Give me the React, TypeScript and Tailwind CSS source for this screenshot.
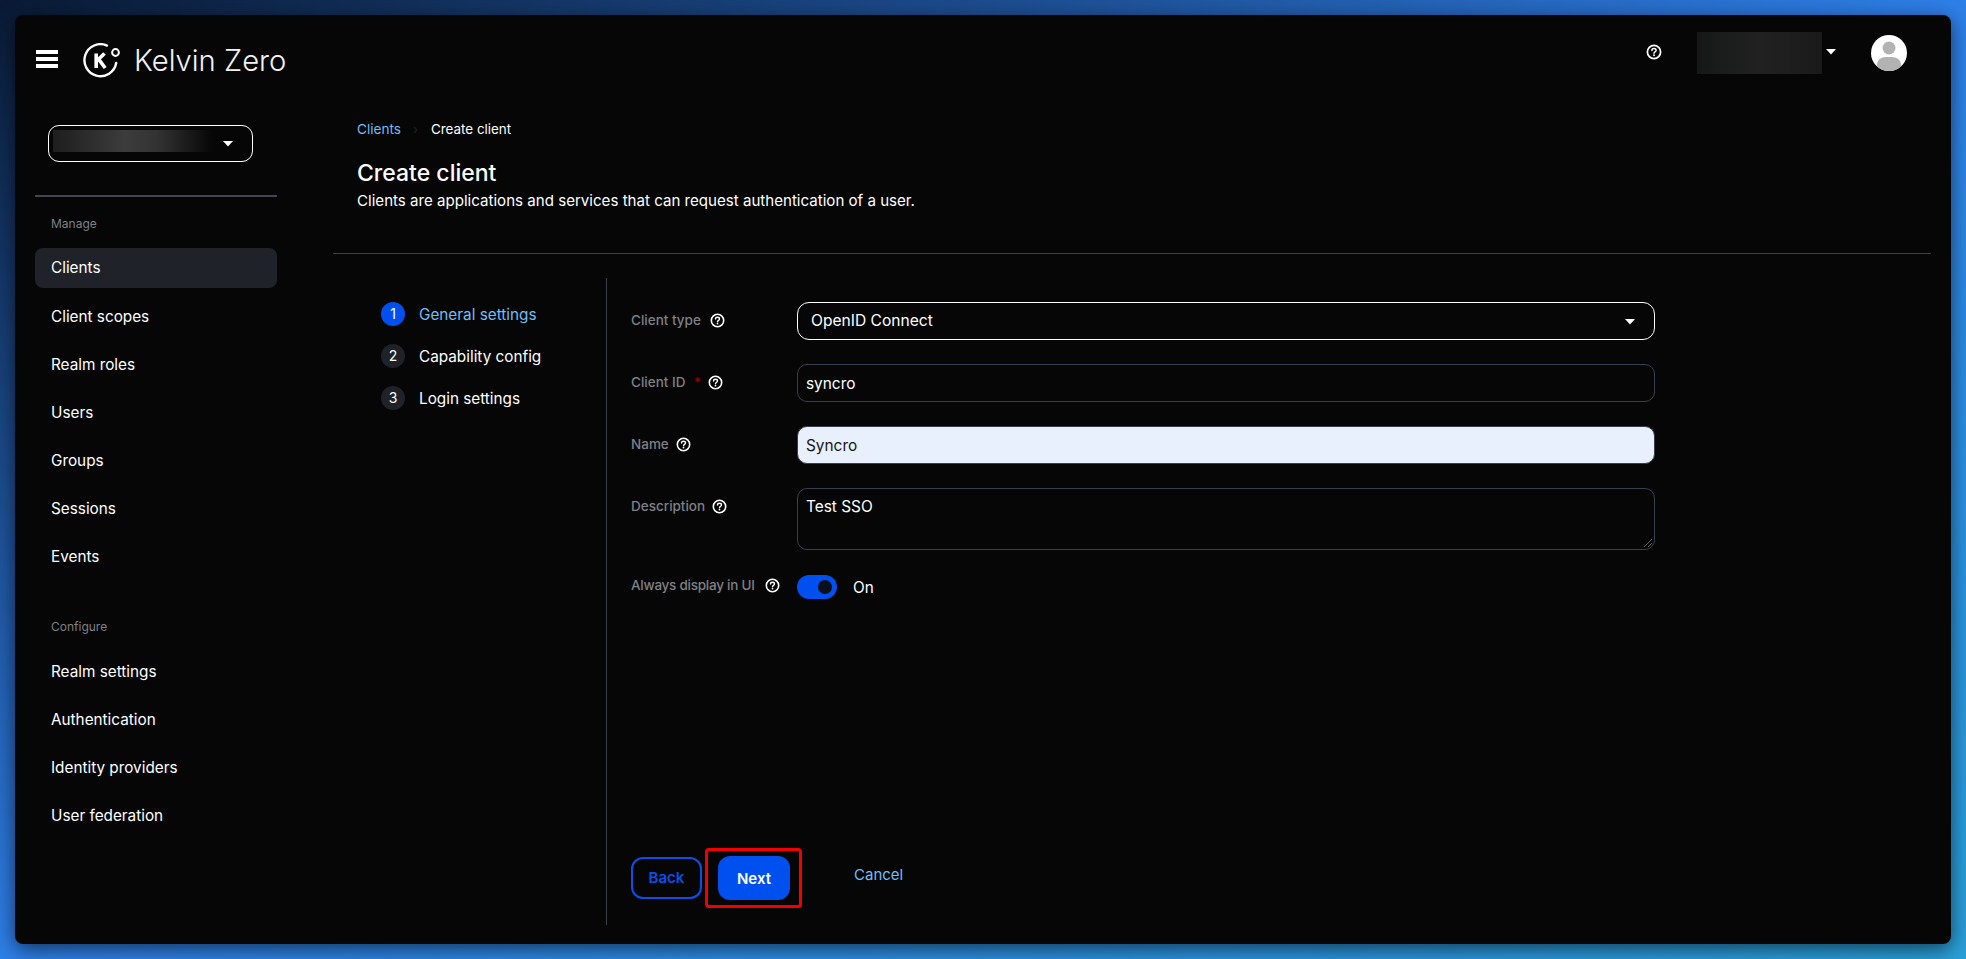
import React from "react";

const font = { fontFamily: "Inter, sans-serif" };

function Help({ className }: { className: string }) {
  return (
    <svg viewBox="0 0 16 16" className={className} fill="none">
      <circle cx="8" cy="8" r="6.6" stroke="#fff" strokeWidth="1.7" />
      <path d="M5.9 6.4c0-1.2 1-1.9 2.1-1.9s2.1.7 2.1 1.8c0 1.6-2.1 1.5-2.1 3" stroke="#fff" strokeWidth="1.5" strokeLinecap="round" />
      <circle cx="8" cy="11.3" r="0.95" fill="#fff" />
    </svg>
  );
}

function Caret({ className }: { className: string }) {
  return (
    <svg viewBox="0 0 10 6" className={className}>
      <path d="M0 0h10L5 5.5z" fill="#fff" />
    </svg>
  );
}

const manage = ["Client scopes", "Realm roles", "Users", "Groups", "Sessions", "Events"];
const configure = ["Realm settings", "Authentication", "Identity providers", "User federation"];

function Step({ n, label, active }: { n: number; label: string; active?: boolean }) {
  return (
    <div className="flex h-[24px] items-center">
      <div className={`flex h-[24px] w-[24px] items-center justify-center rounded-full pb-[2px] text-[14px] text-white ${active ? "bg-[#0050f0]" : "bg-[#1f2229]"}`}>{n}</div>
      <span className={`ml-[14px] pt-[2px] text-[15.3px] ${active ? "text-[#73bcf7]" : "text-white"}`}>{label}</span>
    </div>
  );
}

function FormLabel({ text, top, helpLeft, star, tight }: { text: string; top: number; helpLeft: string; star?: boolean; tight?: boolean }) {
  return (
    <div className={`absolute left-[631px] text-[13.5px] font-medium leading-[16px] text-[#7e8084] ${tight ? "tracking-[-0.25px]" : ""}`} style={{ top }}>
      {text}
      {star && <span className="absolute left-[63px] top-0 text-[#a30000]">*</span>}
      <Help className={`absolute top-[1px] h-[15px] w-[15px] ${helpLeft}`} />
    </div>
  );
}

export default function App() {
  return (
    <div className="relative h-[959px] w-[1966px] overflow-hidden bg-[linear-gradient(to_bottom_right,#0a1a35_0%,#2e7fe8_50%,#2aa0d8_100%)]" style={font}>
      <div className="absolute left-[15px] top-[15px] h-[929px] w-[1936px] rounded-[8px] bg-[#060606] shadow-[0_5px_20px_rgba(0,0,0,0.6)]" />

      {/* Masthead */}
      <div className="absolute left-[36px] top-[50px] flex h-[18px] w-[22px] flex-col justify-between">
        <div className="h-[4px] bg-white" />
        <div className="h-[4px] bg-white" />
        <div className="h-[4px] bg-white" />
      </div>
      <svg viewBox="0 0 38 36" className="absolute left-[83px] top-[43px] h-[36px] w-[38px]" fill="none">
        <path d="M24 2.6A16 16 0 1 0 33.2 20" stroke="#fff" strokeWidth="2.4" strokeLinecap="round" />
        <path d="M13.2 10.5v14.5M13.2 18.5l8.3-8M15.6 16.2l6.6 8.8" stroke="#fff" strokeWidth="3.6" />
        <circle cx="32.5" cy="9.5" r="3.4" stroke="#fff" strokeWidth="2" />
      </svg>
      <div className="absolute left-[134px] top-[43px] text-[29.2px] font-light leading-[36px] text-[#f2f2f2]">Kelvin Zero</div>

      <Help className="absolute left-[1646px] top-[44px] h-[16px] w-[16px]" />
      <div className="absolute left-[1697px] top-[32px] h-[42px] w-[125px] bg-[linear-gradient(90deg,#161818,#212121_50%,#1a1a1a)]" />
      <Caret className="absolute left-[1826px] top-[49px] h-[6px] w-[10px]" />
      <svg viewBox="0 0 36 36" className="absolute left-[1871px] top-[35px] h-[36px] w-[36px]">
        <clipPath id="avatar"><circle cx="18" cy="18" r="18" /></clipPath>
        <g clipPath="url(#avatar)">
          <rect width="36" height="36" fill="#fff" />
          <circle cx="18" cy="13" r="6.5" fill="#b2b2b2" />
          <path d="M6 36v-6c0-5 4-8 9-8h6c5 0 9 3 9 8v6z" fill="#b2b2b2" />
        </g>
      </svg>

      {/* Sidebar */}
      <div className="absolute left-[48px] top-[125px] h-[37px] w-[205px] rounded-[11px] border border-white">
        <div className="absolute left-[4px] top-[4px] h-[22px] w-[160px] bg-[linear-gradient(90deg,#1e1e1e,#3c3c3c_45%,#333_65%,#060606)]" />
        <Caret className="absolute left-[174px] top-[15px] h-[6px] w-[10px]" />
      </div>
      <div className="absolute left-[35px] top-[195px] h-[2px] w-[242px] bg-[#45454f]" />
      <div className="absolute left-[51px] top-[216px] text-[12px] leading-[16px] text-[#7e8084]">Manage</div>
      <div className="absolute left-[35px] top-[248px] flex h-[40px] w-[242px] items-center rounded-[8px] bg-[#1f2229] pl-[16px] pt-[1px] text-[15.3px] text-white">Clients</div>
      <div className="absolute left-[35px] top-[292px] flex w-[242px] flex-col">
        {manage.map((m) => (
          <div key={m} className="flex h-[48px] items-center pl-[16px] pt-[2px] text-[15.3px] text-white">{m}</div>
        ))}
      </div>
      <div className="absolute left-[51px] top-[619px] text-[12px] leading-[16px] text-[#7e8084]">Configure</div>
      <div className="absolute left-[35px] top-[647px] flex w-[242px] flex-col">
        {configure.map((m) => (
          <div key={m} className="flex h-[48px] items-center pl-[16px] pt-[2px] text-[15.3px] text-white">{m}</div>
        ))}
      </div>

      {/* Page header */}
      <div className="absolute left-[357px] top-[121px] text-[13.6px] leading-[16px] text-[#73bcf7]">Clients</div>
      <div className="absolute left-[413px] top-[121px] text-[13px] leading-[16px] text-[#222]">›</div>
      <div className="absolute left-[431px] top-[121px] text-[13.4px] leading-[16px] text-white">Create client</div>
      <h1 className="absolute left-[357px] top-[157px] text-[23px] font-medium leading-[32px] text-white">Create client</h1>
      <p className="absolute left-[357px] top-[191px] text-[15.1px] leading-[20px] text-white">Clients are applications and services that can request authentication of a user.</p>
      <div className="absolute left-[333px] top-[253px] h-[1px] w-[1598px] bg-[#3c3f4a]" />
      <div className="absolute left-[606px] top-[278px] h-[647px] w-[1px] bg-[#3c3f4a]" />

      {/* Steps */}
      <div className="absolute left-[381px] top-[302px] flex flex-col gap-[18px]">
        <Step n={1} label="General settings" active />
        <Step n={2} label="Capability config" />
        <Step n={3} label="Login settings" />
      </div>

      {/* Form */}
      <FormLabel text="Client type" top={312} helpLeft="left-[79px]" />
      <div className="absolute left-[797px] top-[302px] flex h-[38px] w-[858px] items-center rounded-[12px] border border-white pl-[13px] text-[15.6px] text-white">
        OpenID Connect
        <Caret className="absolute right-[19px] top-[16px] h-[6px] w-[10px]" />
      </div>
      <FormLabel text="Client ID" top={374} helpLeft="left-[77px]" star />
      <div className="absolute left-[797px] top-[364px] flex h-[38px] w-[858px] items-center rounded-[10px] border border-[#3c3c50] pl-[8px] pt-[2px] text-[15.4px] text-white">syncro</div>
      <FormLabel text="Name" top={436} helpLeft="left-[45px]" />
      <div className="absolute left-[797px] top-[426px] flex h-[38px] w-[858px] items-center rounded-[10px] border border-[#3c3c50] bg-[#e8f0fe] pl-[8px] pt-[2px] text-[15.4px] text-[#151515]">Syncro</div>
      <FormLabel text="Description" top={498} helpLeft="left-[81px]" />
      <div className="absolute left-[797px] top-[488px] h-[62px] w-[858px] rounded-[10px] border border-[#3c3c50] pl-[8px] pt-[8px] text-[15.4px] leading-[20px] text-white">
        Test SSO
        <svg viewBox="0 0 8 8" className="absolute bottom-[2px] right-[2px] h-[8px] w-[8px]" fill="none">
          <path d="M0 8 8 0M4 8l4-4" stroke="#777" strokeWidth="0.8" />
        </svg>
      </div>
      <FormLabel text="Always display in UI" top={577} helpLeft="left-[134px]" tight />
      <div className="absolute left-[797px] top-[575px] h-[24px] w-[40px] rounded-full bg-[#0050f0]">
        <div className="absolute left-[21px] top-[5px] h-[14px] w-[14px] rounded-full bg-[#0a0f1c]" />
      </div>
      <div className="absolute left-[853px] top-[578px] text-[15.3px] leading-[20px] text-white">On</div>

      {/* Actions */}
      <div className="absolute left-[631px] top-[857px] flex h-[42px] w-[71px] items-center justify-center rounded-[12px] border-2 border-[#0a50e8] pt-[1px] text-[15px] font-semibold text-[#0a50e8]">Back</div>
      <div className="absolute left-[718px] top-[856px] flex h-[44px] w-[72px] items-center justify-center rounded-[12px] bg-[#0050f0] pt-[2px] text-[15px] font-semibold text-white">Next</div>
      <div className="absolute left-[705px] top-[848px] h-[60px] w-[97px] rounded-[4px] border-[3.5px] border-[#f00000]" />
      <div className="absolute left-[854px] top-[865px] text-[15px] leading-[20px] text-[#73bcf7]">Cancel</div>
    </div>
  );
}
